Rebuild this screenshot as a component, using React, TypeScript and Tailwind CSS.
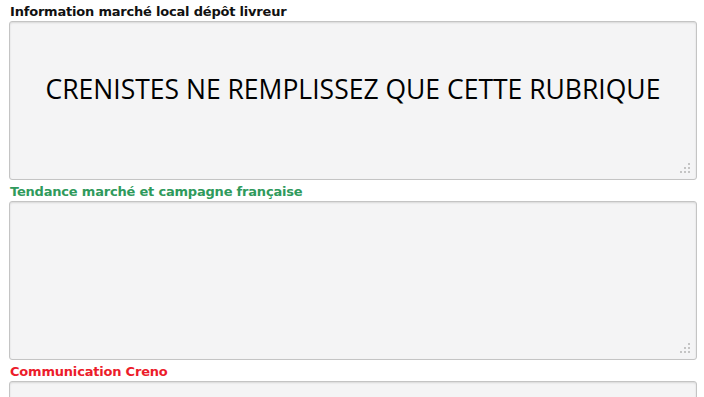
const Grip = () => (
  <svg width="10" height="10" viewBox="0 0 10 10" className="absolute right-[6px] bottom-[6px]">
    <rect x="8" y="0" width="2" height="2" fill="#c4c4c4" />
    <rect x="4" y="4" width="2" height="2" fill="#c4c4c4" />
    <rect x="8" y="4" width="2" height="2" fill="#c4c4c4" />
    <rect x="0" y="8" width="2" height="2" fill="#c4c4c4" />
    <rect x="4" y="8" width="2" height="2" fill="#c4c4c4" />
    <rect x="8" y="8" width="2" height="2" fill="#c4c4c4" />
  </svg>
);

const Field = ({ label, color, children }: { label: string; color: string; children?: React.ReactNode }) => (
  <div className="flex flex-col">
    <div className={`h-[19px] pl-[10px] text-[13px] font-bold leading-[19px] ${color}`} style={{ fontFamily: '"DejaVu Sans", sans-serif', letterSpacing: '-0.2px' }}>
      {label}
    </div>
    <div className="relative ml-[9px] mr-[7px] h-[159px] rounded-[3px] border border-[#c4c4c4] bg-[#f4f4f5] shadow-[inset_0_1px_2px_rgba(0,0,0,0.12)]">
      {children}
      <Grip />
    </div>
  </div>
);

export default function App() {
  return (
    <div className="h-[397px] w-[704px] overflow-hidden bg-white pt-[2px]">
      <div className="flex flex-col gap-[2px]">
        <Field label="Information marché local dépôt livreur" color="text-[#111111]">
          <div className="flex h-full items-center justify-center pb-[22px] text-[26.5px] text-black" style={{ fontFamily: '"Open Sans", sans-serif' }}>
            CRENISTES NE REMPLISSEZ QUE CETTE RUBRIQUE
          </div>
        </Field>
        <Field label="Tendance marché et campagne française" color="text-[#2f9a5c]" />
        <Field label="Communication Creno" color="text-[#ec1c2b]" />
      </div>
    </div>
  );
}
